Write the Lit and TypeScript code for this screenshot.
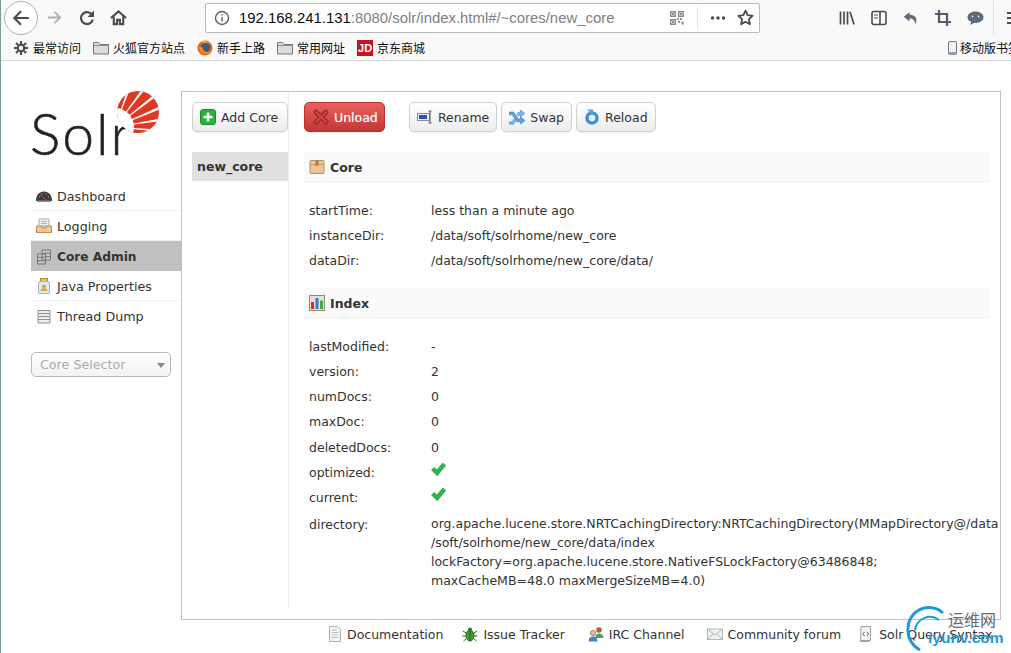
import { LitElement, html, css, svg } from "lit";
import { customElement } from "lit/decorators.js";

const ico = (c: unknown, w = 16, h = 16) => html`<svg class="ic" width=${w} height=${h} viewBox="0 0 16 16">${c}</svg>`;

const I = {
  back: html`<svg width="20" height="20" viewBox="0 0 18 18" fill="none" stroke="#4a4a4f" stroke-width="1.900"><path d="M16 9H3M9 3L3 9l6 6"/></svg>`,
  fwd: html`<svg width="17" height="17" viewBox="0 0 18 18" fill="none" stroke="#b1b1b3" stroke-width="2"><path d="M2 9h13M9 3l6 6-6 6"/></svg>`,
  reload: html`<svg width="16" height="16" viewBox="0 0 16 16" fill="none" stroke="#4a4a4f" stroke-width="2.200"><path d="M13.800 9.500A6 6 0 1 1 12 3.600"/><path d="M15 .5v6.500H8.500z" fill="#4a4a4f" stroke="none"/></svg>`,
  home: html`<svg width="17" height="17" viewBox="0 0 18 18" fill="none" stroke="#4a4a4f" stroke-width="2.200"><path d="M1 9.500L9 2.500l8 7M4 8v8h3.500v-4.500h3V16H14V8"/></svg>`,
  info: html`<svg width="16" height="16" viewBox="0 0 16 16" fill="none" stroke="#5f5f63" stroke-width="1.400"><circle cx="8" cy="8" r="6.500"/><path d="M8 7v4.500M8 4.200v1.400"/></svg>`,
  qr: html`<svg width="14" height="14" viewBox="0 0 14 14" fill="#8a8a8e"><path d="M.7 .7h4.600v4.600H.7zM8.700 .7h4.600v4.600H8.700zM.7 8.700h4.600v4.600H.7z" fill="none" stroke="#8a8a8e" stroke-width="1.400"/><path d="M2 2h2v2H2zM10 2h2v2h-2zM2 10h2v2H2zM7 7h2v2H7zM10 7h2v2h-2zM8 10h2v2H8zM11.500 10.500h2v3h-2z"/></svg>`,
  dots: html`<svg width="16" height="16" viewBox="0 0 16 16" fill="#4a4a4f"><circle cx="2.500" cy="8" r="1.700"/><circle cx="8" cy="8" r="1.700"/><circle cx="13.500" cy="8" r="1.700"/></svg>`,
  star: html`<svg width="17" height="17" viewBox="0 0 17 17" fill="none" stroke="#4a4a4f" stroke-width="1.800" stroke-linejoin="round"><path d="M8.500 1.600l2.100 4.600 5 .6-3.700 3.400 1 5-4.400-2.500-4.400 2.500 1-5L1.400 6.800l5-.6z"/></svg>`,
  lib: html`<svg width="16" height="16" viewBox="0 0 16 16" fill="none" stroke="#4a4a4f" stroke-width="1.700"><path d="M1.500 1.500v13M5 1.500v13M8.500 1.500v13M11 1.700l4 12.800"/></svg>`,
  side: html`<svg width="16" height="16" viewBox="0 0 16 16" fill="none" stroke="#4a4a4f" stroke-width="1.600"><rect x="1" y="1.500" width="14" height="13" rx="2"/><path d="M9 1.500v13" /><path d="M3 5h4M3 8h4" stroke-width="1.200"/></svg>`,
  undo: html`<svg width="16" height="16" viewBox="0 0 16 16" fill="#5d6b7a"><path d="M6.500 2L.8 6.800l5.700 4.700V8.500c3.500 0 5 1.500 5.800 5.500 2.500-4.500 1-9-5.800-9.200z"/></svg>`,
  crop: html`<svg width="16" height="16" viewBox="0 0 16 16" fill="none" stroke="#505d6d" stroke-width="2.200"><path d="M4 0v12h12M0 4h12v12"/></svg>`,
  chat: html`<svg width="17" height="16" viewBox="0 0 17 16" fill="#5d6b7a"><path d="M8.500 1.500c4.400 0 8 2.500 8 5.700s-3.600 5.700-8 5.700l-1.200-.1L3.500 15l.6-3.200C1.800 10.800.5 9.100.5 7.200.5 4 4.100 1.500 8.500 1.500z"/><circle cx="5.500" cy="6.500" r=".9" fill="#dfe3e7"/><circle cx="11.500" cy="6.500" r=".9" fill="#dfe3e7"/></svg>`,
  burger: html`<svg width="16" height="14" viewBox="0 0 16 14" fill="none" stroke="#4a4a4f" stroke-width="2"><path d="M0 2h16M0 7h16M0 12h16"/></svg>`,
  gear: html`<svg width="14" height="14" viewBox="0 0 14 14" fill="none" stroke="#4a4a4f"><circle cx="7" cy="7" r="3.300" stroke-width="2.200"/><path d="M7 0v3M7 11v3M0 7h3M11 7h3M2 2l2 2M10 10l2 2M12 2l-2 2M4 10l-2 2" stroke-width="2"/></svg>`,
  folder: html`<svg width="16" height="14" viewBox="0 0 16 14"><path d="M.5 13v-11.500h5l1.500 2h8.500V13z" fill="#dcdcdc" stroke="#77777b"/><path d="M1 4.500h14" stroke="#8f8f93"/></svg>`,
  ff: html`<svg width="16" height="16" viewBox="0 0 16 16"><circle cx="8" cy="8" r="7.500" fill="#e66000"/><circle cx="8.500" cy="7.500" r="4.500" fill="#2a5c9e"/><path d="M2 7c0 5 4 7.500 7 7.500 3.500 0 6-3 6-6.500-1 3-3 4.500-5.500 4C6.500 11.500 5.500 9 6 7 4.500 7.500 3 7 2 7z" fill="#f08a1d"/><path d="M4 1.500C7 .5 12 1 14 5c-2-2-4-2.500-6-2-1.500.3-3-.3-4-1.500z" fill="#f5a623"/></svg>`,
  phone: html`<svg width="9" height="14" viewBox="0 0 9 14"><rect x=".5" y=".5" width="8" height="13" rx="1.500" fill="#f3f4f6" stroke="#6d7884"/><rect x="1" y="11" width="7" height="2.500" fill="#9aa5b1"/></svg>`,
};

const dashIcon = ico(svg`<path d="M0 13c0-6 3.200-9.500 8-9.500s8 3.500 8 9.500z" fill="#3b3b40"/><path d="M1 13.200h14" stroke="#8a8a8a" stroke-width="1.500"/><path d="M4 6.500l5.500 5" stroke="#d8413a" stroke-width="1"/><path d="M3 9h1M6 5.500v1M10 5.500v1M13 9h-1" stroke="#aaa"/>`);
const logIcon = ico(svg`<path d="M3 1h10v8H3z" fill="#eef3f6" stroke="#9cafbd"/><path d="M5 3.500h6M5 5.500h6M5 7.500h6" stroke="#a9bac6"/><path d="M.5 8h4.500l1 2h4l1-2h4.500v6.500H.5z" fill="#f3c695" stroke="#c58b4c"/>`);
const coreIcon = ico(svg`<path d="M1.500 5h8v10h-8zM6 1h8.500v10H6z" fill="#c2c8c8" stroke="#6f7676"/><path d="M1.500 8.300h8M1.500 11.700h8M6 4.300h8.500M10 7.700h4.500" stroke="#6f7676"/>`);
const javaIcon = ico(svg`<rect x="4.500" y=".5" width="7" height="3" fill="#e8c56b" stroke="#a88a3c"/><rect x="2.500" y="3.500" width="11" height="12" rx="1.500" fill="#dceaf5" stroke="#9db5c7"/><circle cx="8" cy="8.500" r="2" fill="#e0a44e"/><path d="M4.500 13c0-2 1.500-3 3.500-3s3.500 1 3.500 3z" fill="#e0a44e"/>`);
const threadIcon = ico(svg`<path d="M2 1.500h12v3H2zM2 4.500h12v3H2zM2 7.500h12v3H2zM2 10.500h12v3.500H2z" fill="#eceeee" stroke="#8d9292"/>`);
const addIcon = ico(svg`<rect x=".5" y=".5" width="15" height="15" rx="2.500" fill="#29b33c" stroke="#1c8a2c"/><path d="M8 3.500v9M3.500 8h9" stroke="#fff" stroke-width="2.600"/>`);
const unloadIcon = ico(svg`<path d="M3 3l10 10M13 3L3 13" stroke="#a82828" stroke-width="5" stroke-linecap="round"/><path d="M3 3l10 10M13 3L3 13" stroke="#c84848" stroke-width="2" stroke-linecap="round"/>`);
const renameIcon = ico(svg`<rect x=".5" y="4.500" width="12" height="7" fill="#eee" stroke="#8c8c96"/><rect x="2" y="6" width="8" height="4" fill="#2d4fc4"/><path d="M11.500 2h3M11.500 14h3M13 2v12" stroke="#555" fill="none"/>`);
const swapIcon = ico(svg`<path d="M0 3h4.500l5 7h2V8l4.500 3.500-4.500 3.500v-2.200H8l-5-7H0z" fill="#5b9ee0" stroke="#3a76b8" stroke-width=".5"/><path d="M0 13h3l2-3 1.500 2-2 3.200H0zM9 3.500h2.500V1L16 4.500 11.500 8V6H10.500L9.500 7.300 8 5.300z" fill="#7db6ec" stroke="#3a76b8" stroke-width=".5"/>`);
const reloadIcon = ico(svg`<circle cx="8" cy="9" r="5" fill="none" stroke="#3f8fdb" stroke-width="3.500"/><path d="M3 .5h6v6z" fill="#5aa5e6"/><circle cx="8" cy="9" r="3" fill="#e8f2fb"/>`);
const coreHdr = ico(svg`<rect x="1" y="1.500" width="14" height="13" rx="1" fill="#eec395" stroke="#b89066"/><path d="M1 5.500h14" stroke="#c79c6e"/><path d="M6.500 1.500h3V7H8.800L8 6.300 7.200 7h-.7z" fill="#a27a50"/>`);
const indexHdr = ico(svg`<rect x=".5" y=".5" width="15" height="15" fill="#e9dfd3" stroke="#998a78"/><path d="M2 7h3v7H2z" fill="#d92b2b"/><path d="M6.500 3h3v11h-3z" fill="#2f7fd3"/><path d="M11 5.500h3V14h-3z" fill="#3fae3f"/>`);
const docIcon = ico(svg`<path d="M2.500 .5h8l3 3v12h-11z" fill="#f2f5f3" stroke="#aab4ad"/><path d="M4.500 4h5M4.500 6.500h7M4.500 9h7M4.500 11.500h7" stroke="#bcc5bf"/>`);
const bugIcon = ico(svg`<ellipse cx="8" cy="9.500" rx="4" ry="5.500" fill="#3f9a3a" stroke="#24661f"/><circle cx="8" cy="3.500" r="2" fill="#2d7a29"/><path d="M8 4v11M1 5l3.500 2.500M15 5l-3.500 2.500M.5 10h3.500M15.500 10H12M1.500 15l3-2.500M14.500 15l-3-2.500" stroke="#24661f"/>`);
const ircIcon = ico(svg`<circle cx="11" cy="4" r="2.800" fill="#b5613a"/><path d="M7 12c0-3 2-4.500 4-4.500s4.500 1.500 4.500 4.500z" fill="#4aa15a"/><circle cx="5" cy="7" r="2.600" fill="#e9bb8f" stroke="#7a5030" stroke-width=".6"/><path d="M.5 15.500c0-3.500 2-5 4.500-5s4.500 1.500 4.500 5z" fill="#4e7fbe"/>`);
const mailIcon = ico(svg`<rect x=".5" y="3" width="15" height="10.500" fill="#eef2f0" stroke="#aebab5"/><path d="M.5 3L8 9l7.500-6M.5 13.500L6 7.800M15.500 13.500L10 7.800" fill="none" stroke="#aebab5"/>`);
const syntaxIcon = ico(svg`<path d="M3 .5h9.500v14h-10z" fill="#eef1ef" stroke="#9aa59f"/><path d="M1.500 15.500h10" stroke="#9aa59f"/><path d="M6.500 6L4.800 8l1.700 2M9 6l1.700 2L9 10" fill="none" stroke="#555" stroke-width=".9"/>`);
const check = html`<svg class="ic" width="15" height="15" viewBox="0 0 14 14"><path d="M.5 7.500l2.500-2.300L5.500 7.500 11 1l2.700 2.200L5.800 12.800z" fill="#2cb84a" stroke="#1f8d38" stroke-width=".6"/></svg>`;

const F = [-2, 36];
const wedge = (deg: number, half: number) => {
  const p = (a: number) => {
    const r = (a * Math.PI) / 180;
    return `${F[0] + 70 * Math.cos(r)},${F[1] - 70 * Math.sin(r)}`;
  };
  return svg`<polygon points="${F[0]},${F[1]} ${p(deg - half)} ${p(deg + half)}" fill="#fff"/>`;
};
const sun = html`<svg class="logosvg" width="42" height="42" viewBox="0 0 42 42">
  <defs><clipPath id="disc"><circle cx="21" cy="21" r="21"/></clipPath></defs>
  <g clip-path="url(#disc)">
    <rect width="42" height="42" fill="#dc3a22"/>
    ${[-5, 9, 23, 38, 53, 70].map((d) => wedge(d, 1.6))}
    <circle cx=${F[0]} cy=${F[1]} r="19" fill="#fff"/>
  </g>
</svg>`;

@customElement("app-root")
export class AppRoot extends LitElement {
  static styles = css`
    :host { display: block; width: 1011px; height: 653px; overflow: hidden; position: relative; background: #fff; font-family: "DejaVu Sans", sans-serif; font-size: 12.5px; color: #333; }
    .page { height: 653px; display: flex; flex-direction: column; border-left: 1px solid #7d9a98; box-sizing: border-box; }
    .ic { display: block; flex: none; }
    .chrome { background: #f9f9fa; border-bottom: 1px solid #d8d8da; height: 61px; flex: none; box-sizing: border-box; display: flex; flex-direction: column; overflow: hidden; }
    .nav { height: 35px; display: flex; align-items: center; position: relative; flex: none; }
    .nav > * { flex: none; }
    .backbtn { width: 34px; height: 34px; margin-left: 3px; border: 1px solid #b1b1b3; border-radius: 50%; background: #fff; display: flex; align-items: center; justify-content: center; box-sizing: border-box; }
    .fwd { margin-left: 8px; display: flex; }
    .rl { margin-left: 16px; display: flex; }
    .hm { margin-left: 15px; display: flex; }
    .url { width: 555px; height: 30px; background: #fff; border: 1px solid #b9b9bb; border-radius: 2px; box-sizing: border-box; display: flex; align-items: center; padding-left: 8px; margin-left: 78px; }
    .addr { margin-left: 9px; font-family: "Liberation Sans", sans-serif; font-size: 14.900px; color: #808084; flex: 1; white-space: nowrap; }
    .addr b { font-weight: 400; color: #0c0c0d; }
    .sep { width: 1px; height: 22px; background: #e1e1e3; margin: 0 12px 0 13px; }
    .urlr { display: flex; align-items: center; }
    .star { margin-left: 11px; margin-right: 5px; display: flex; }
    .tools { display: flex; align-items: center; gap: 16px; margin-left: 79px; }
    .vsep { width: 1px; height: 34px; background: #e0e0e2; margin-left: 9px; }
    .burger { margin-left: 13px; display: flex; }
    .bm { height: 25px; display: flex; align-items: center; padding-left: 13px; font-family: "Noto Sans CJK SC", sans-serif; font-size: 12px; color: #0c0c0d; white-space: nowrap; position: relative; flex: none; }
    .bm span.i { display: flex; align-items: center; gap: 4px; margin-right: 12px; }
    .bm .g { margin-right: 1px; display: flex; }
    .bm .jd { width: 16px; height: 16px; background: #c4161c; color: #fff; font: 700 11px "Liberation Sans", sans-serif; display: flex; align-items: center; justify-content: center; }
    .bm .mob { margin-left: auto; margin-right: -9px; display: flex; gap: 3px; align-items: center; }

    .content { flex: 1; min-height: 0; display: flex; align-items: flex-start; padding: 30px 0 0 30px; }
    .side { width: 150px; flex: none; }
    .logo { height: 90px; display: block; position: relative; }
    .logotext { position: absolute; left: -1px; top: 4px; font-family: "Lato", sans-serif; font-weight: 300; font-size: 57px; line-height: 76px; color: #1f2329; letter-spacing: 2px; -webkit-text-stroke: .6px #1f2329; }
    .logosvg { position: absolute; left: 86px; top: 0; }
    .menu { display: flex; flex-direction: column; }
    .m { height: 30px; box-sizing: border-box; display: flex; align-items: center; gap: 5px; padding: 1px 0 0 5px; border-bottom: 1px solid #f0f0f0; color: #333; font-size: 12.7px; }
    .m:last-child { border-bottom: 0; }
    .m.act { background: #c0c0c0; font-weight: 700; border-bottom: 0; font-size: 12.2px; }
    .sel { margin: 21px 0 0 0; width: 140px; height: 25px; border: 1px solid #b8b8b8; border-radius: 5px; box-sizing: border-box; background: linear-gradient(#fff, #f3f3f3); display: flex; align-items: center; padding: 0 5px 0 8px; color: #aaa; justify-content: space-between; font-size: 12.7px; }
    .sel i { border: 4px solid transparent; border-top: 5px solid #888; border-bottom: 0; margin-top: 2px; }

    .box { width: 820px; height: 529px; border: 1px solid #c0c0c0; box-sizing: border-box; display: flex; }
    .corecol { width: 107px; flex: none; border-right: 1px solid #f0f0f0; padding: 10px 0 0 10px; box-sizing: border-box; height: 517px; }
    .btn { height: 30px; box-sizing: border-box; border: 1px solid #d0d0d0; border-radius: 5px; background: linear-gradient(#fff, #ededed); display: flex; align-items: center; gap: 5px; padding: 0 7px; color: #333; white-space: nowrap; box-shadow: 0 1px 1px rgba(0,0,0,.05); }
    .btn.add { width: 96px; }
    .btn.red { background: linear-gradient(#ec5f5c, #c23636); border-color: #b83030; color: #fff; padding-left: 8px; width: 81px; text-shadow: 0 0 1px rgba(255,255,255,.5); }
    .corelist { margin: 20px 0 0 0; }
    .core { background: #e0e0e0; height: 29px; line-height: 30px; padding-left: 5px; font-weight: 700; color: #333; }
    .main { flex: 1; padding: 10px 10px 0 15px; box-sizing: border-box; min-width: 0; }
    .acts { display: flex; gap: 4px; }
    .acts .red { margin-right: 20px; }
    h2 { margin: 0; font-size: 12.5px; font-weight: 700; height: 30px; box-sizing: border-box; background: #fafafa; border-bottom: 1px solid #f0f0f0; display: flex; align-items: center; gap: 5px; padding: 1px 0 0 5px; color: #333; }
    .s1 { margin-top: 20px; }
    .s2 { margin-top: 15px; }
    dl { margin: 0; padding: 16px 0 0 5px; display: grid; grid-template-columns: 122px 1fr; align-items: start; }
    dl.x { padding-top: 15.55px; }
    dt, dd { margin: 0; white-space: nowrap; }
    .c dt, .c dd { line-height: 25px; height: 25px; }
    .x dt, .x dd { line-height: 25.3px; height: 25.3px; }
    .x dd.ok { display: flex; align-items: center; margin-top: -3px; }
    .x dd.multi { height: auto; line-height: 19px; padding-top: 3px; margin-right: -12px; }
    .x dt.multi { padding-top: 1px; }
    .foot { display: flex; align-items: center; height: 32px; box-sizing: border-box; padding: 0 0 6px 326px; flex: none; white-space: nowrap; color: #333; }
    .f { display: flex; align-items: center; gap: 5px; margin-right: 20px; }
    .f.doc { gap: 4px; margin-right: 19px; }
    .f.bug { margin-right: 23px; }
    .f.irc { margin-right: 22px; }
    .f.mail { margin-right: 17px; }
    .wm { position: absolute; left: 905px; top: 606px; width: 106px; height: 47px; }
    .wm .t1 { position: absolute; left: 43px; top: 3px; font-family: "Noto Sans CJK SC", sans-serif; font-size: 16px; line-height: 20px; color: #6a6a6a; }
    .wm .t2 { position: absolute; left: 23px; top: 22px; font-family: "Liberation Sans", sans-serif; font-weight: 700; font-size: 15.500px; line-height: 20px; color: #1f9ad6; }
    .wm svg { position: absolute; left: 0; top: 0; }
  `;

  render() {
    const coreRows = [["startTime:", "less than a minute ago"], ["instanceDir:", "/data/soft/solrhome/new_core"], ["dataDir:", "/data/soft/solrhome/new_core/data/"]];
    const idxRows = [["lastModified:", "-"], ["version:", "2"], ["numDocs:", "0"], ["maxDoc:", "0"], ["deletedDocs:", "0"]];
    return html`<div class="page">
      <div class="chrome">
        <div class="nav">
          <div class="backbtn">${I.back}</div>
          <div class="fwd">${I.fwd}</div>
          <div class="rl">${I.reload}</div>
          <div class="hm">${I.home}</div>
          <div class="url">
            ${I.info}
            <div class="addr"><b>192.168.241.131</b>:8080/solr/index.html#/~cores/new_core</div>
            <div class="urlr">${I.qr}<div class="sep"></div>${I.dots}<div class="star">${I.star}</div></div>
          </div>
          <div class="tools">${I.lib}${I.side}${I.undo}${I.crop}${I.chat}</div>
          <div class="vsep"></div>
          <div class="burger">${I.burger}</div>
        </div>
        <div class="bm">
          <span class="i"><span class="g">${I.gear}</span>最常访问</span>
          <span class="i">${I.folder}火狐官方站点</span>
          <span class="i">${I.ff}新手上路</span>
          <span class="i">${I.folder}常用网址</span>
          <span class="i"><span class="jd">JD</span>京东商城</span>
          <span class="mob">${I.phone}移动版书签</span>
        </div>
      </div>
      <div class="content">
        <div class="side">
          <div class="logo">
            <div class="logotext">Solr</div>
            ${sun}
          </div>
          <div class="menu">
            <div class="m">${dashIcon}Dashboard</div>
            <div class="m">${logIcon}Logging</div>
            <div class="m act">${coreIcon}Core Admin</div>
            <div class="m">${javaIcon}Java Properties</div>
            <div class="m">${threadIcon}Thread Dump</div>
          </div>
          <div class="sel">Core Selector<i></i></div>
        </div>
        <div class="box">
          <div class="corecol">
            <div class="btn add">${addIcon}Add Core</div>
            <div class="corelist"><div class="core">new_core</div></div>
          </div>
          <div class="main">
            <div class="acts">
              <div class="btn red">${unloadIcon}Unload</div>
              <div class="btn">${renameIcon}Rename</div>
              <div class="btn">${swapIcon}Swap</div>
              <div class="btn">${reloadIcon}Reload</div>
            </div>
            <h2 class="s1">${coreHdr}Core</h2>
            <dl class="c">${coreRows.map(([a, b]) => html`<dt>${a}</dt><dd>${b}</dd>`)}</dl>
            <h2 class="s2">${indexHdr}Index</h2>
            <dl class="x">
              ${idxRows.map(([a, b]) => html`<dt>${a}</dt><dd>${b}</dd>`)}
              <dt>optimized:</dt><dd class="ok">${check}</dd>
              <dt>current:</dt><dd class="ok">${check}</dd>
              <dt class="multi">directory:</dt>
              <dd class="multi">org.apache.lucene.store.NRTCachingDirectory:NRTCachingDirectory(MMapDirectory@/data<br>/soft/solrhome/new_core/data/index<br>lockFactory=org.apache.lucene.store.NativeFSLockFactory@63486848;<br>maxCacheMB=48.0 maxMergeSizeMB=4.0)</dd>
            </dl>
          </div>
        </div>
      </div>
      <div class="foot">
        <div class="f doc">${docIcon}Documentation</div>
        <div class="f bug">${bugIcon}Issue Tracker</div>
        <div class="f irc">${ircIcon}IRC Channel</div>
        <div class="f mail">${mailIcon}Community forum</div>
        <div class="f">${syntaxIcon}Solr Query Syntax</div>
      </div>
      <div class="wm">
        <svg width="50" height="47" viewBox="0 0 50 47" fill="none"><path d="M38 7A21 21 0 0 0 3 24a22 22 0 0 0 12 20" stroke="#1f9ad6" stroke-width="3"/><path d="M34 14A15 15 0 0 0 10 24" stroke="#1f9ad6" stroke-width="2"/></svg>
        <div class="t1">运维网</div>
        <div class="t2">iyunv.com</div>
      </div>
    </div>`;
  }
}
